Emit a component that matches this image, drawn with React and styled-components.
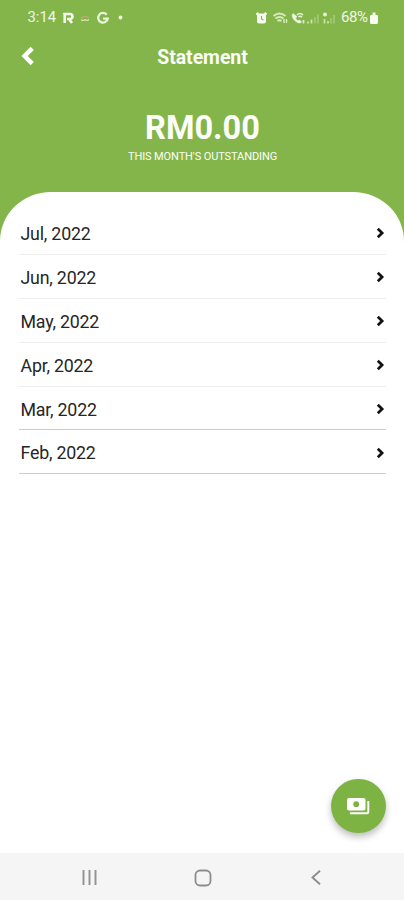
import React from "react";
import styled, { createGlobalStyle } from "styled-components";

const GlobalStyle = createGlobalStyle`
  * {
    box-sizing: border-box;
  }

  body {
    margin: 0;
    background-color: #fff;
    font-family: Roboto, "Liberation Sans", sans-serif;
  }
`;

const StyledScreen = styled.div`
  display: flex;
  flex-direction: column;
  width: 100%;
  height: 900px;
  overflow: hidden;
  background-color: #83b54b;
`;

const StyledStatusBar = styled.div`
  display: flex;
  justify-content: space-between;
  align-items: center;
  height: 35px;
  padding: 0 25px 0 27.5px;
  color: #f0f6e6;
`;

const StyledStatusGroup = styled.div`
  display: flex;
  align-items: center;

  & svg {
    display: block;
  }
`;

const StyledTime = styled.span`
  width: 34px;
  padding-bottom: 1px;
  font-size: 14.8px;
`;

const StyledBattery = styled.span`
  width: 28px;
  padding-bottom: 1px;
  font-size: 15px;
  letter-spacing: -0.4px;
`;

const StyledAppBar = styled.header`
  display: grid;
  grid-template-columns: 56px 1fr 55px;
  align-items: center;
  height: 44px;
`;

const StyledBack = styled.button`
  display: flex;
  align-items: center;
  height: 44px;
  border: none;
  padding: 0 0 2px 21px;
  background: none;
  cursor: pointer;
`;

const StyledTitle = styled.h1`
  margin: 0;
  padding-top: 2px;
  text-align: center;
  font-size: 19.4px;
  line-height: 24px;
  font-weight: 700;
  color: #fbfdf6;
`;

const StyledSummary = styled.div`
  display: flex;
  flex-direction: column;
  align-items: center;
  height: 112.5px;
  padding: 29px 0 0 1px;
  color: #fdfef9;
`;

const StyledAmount = styled.div`
  font-size: 32.6px;
  line-height: 40px;
  font-weight: 700;
`;

const StyledCaption = styled.div`
  padding-top: 2px;
  font-size: 11px;
  line-height: 14px;
  letter-spacing: -0.1px;
`;

const StyledSheet = styled.main`
  position: relative;
  flex: 1;
  padding: 19.5px 18px 0 19px;
  border-radius: 51px 51px 0 0 / 49px 49px 0 0;
  background-color: #fff;
`;

const StyledRow = styled.div`
  display: flex;
  justify-content: space-between;
  align-items: center;
  height: 43.9px;
  padding: 2px 1px 0 1.5px;
  border-bottom: 1px solid ${(props) => (props.$dark ? "#cdcdcd" : "#ededed")};
`;

const StyledMonth = styled.span`
  color: #262626;
  font-size: 17.8px;
  letter-spacing: -0.2px;
`;

const StyledFab = styled.button`
  position: absolute;
  right: 18.5px;
  bottom: 20px;
  display: flex;
  align-items: center;
  justify-content: center;
  width: 54.5px;
  height: 54.5px;
  border: none;
  border-radius: 50%;
  padding: 1px 0 0;
  background-color: #7db343;
  box-shadow: 0 4px 7px rgba(0, 0, 0, 0.26);
  cursor: pointer;
`;

const StyledNavBar = styled.nav`
  display: grid;
  grid-template-columns: repeat(3, 113px);
  justify-content: center;
  align-items: center;
  justify-items: center;
  height: 47px;
  padding: 2px 0 0 1px;
  background-color: #f5f5f5;
`;

const months = [
  { label: "Jul, 2022" },
  { label: "Jun, 2022" },
  { label: "May, 2022" },
  { label: "Apr, 2022" },
  { label: "Mar, 2022", dark: true },
  { label: "Feb, 2022", dark: true },
];

function NotificationIcons() {
  return (
    <svg width="66" height="16" viewBox="0 0 66 16" fill="none">
      <path
        d="M2.700 13V4h5.300a2.400 2.400 0 0 1 0 5H5M7 9l3 4"
        stroke="#f5faee"
        strokeWidth="2.6"
      />
      <path d="M.5 3 3.500 3v3Z" fill="#f5faee" />
      <path d="M19 8q4-3 8 0" stroke="#d9a08a" strokeWidth="1.2" />
      <path d="M19 9.500q2 2 4 0q2 2 4 0" stroke="#cfe3ac" strokeWidth="1.1" />
      <path
        d="M44.700 4.700A4.800 4.800 0 1 0 45.700 8.700H41"
        stroke="#e9f3da"
        strokeWidth="2.3"
      />
      <circle cx="58.500" cy="7.500" r="1.900" fill="#f2f8e8" />
    </svg>
  );
}

function SignalIcons() {
  return (
    <svg width="85" height="16" viewBox="0 0 85 16" fill="none">
      <rect x="1" y="3.500" width="9" height="10" rx="2" fill="#f7fbf0" />
      <path
        d="M.3 4.500 2.500 2.700M10.700 4.500 8.500 2.700"
        stroke="#f7fbf0"
        strokeWidth="1.8"
      />
      <path d="M5.500 6v3l2 1" stroke="#83b54b" strokeWidth="1.1" />
      <path
        d="M17.500 6q6-5 12 0M19.500 8.500q4-3 8 0M21.500 11q2-1.500 4 0"
        stroke="#d9eabd"
        strokeWidth="1.9"
      />
      <path d="M28 9v4M30.500 9v4" stroke="#d9eabd" strokeWidth="1.4" />
      <path
        d="M37 3.500c-2 2 0 6.500 4.500 9 1.500.8 3 .5 4-.5l-2-2-1.600.8c-1-.6-2-1.800-2.300-2.800l1.400-1.300Z"
        fill="#f2f8e8"
        stroke="#f2f8e8"
        strokeWidth=".6"
      />
      <path d="M41 5q3-3 6 0M42.500 7q1.500-1.500 3.500 0" stroke="#e9f3da" strokeWidth="1.6" />
      <path d="M47.500 10v3.500" stroke="#d9eabd" strokeWidth="1.800" />
      <path d="M52 11.500v2M55.500 9.500v4" stroke="#cfe3ac" strokeWidth="1.800" />
      <path d="M59 7v6.500M62 4.500v9" stroke="#a2c874" strokeWidth="1.800" />
      <circle cx="69" cy="4.500" r="2" fill="#e6f1d5" />
      <path d="M68.500 9v4.500M72 11v2.500" stroke="#cfe3ac" strokeWidth="1.700" />
      <path d="M75 8v5.500M78 5v8.500" stroke="#a2c874" strokeWidth="1.800" />
    </svg>
  );
}

function StatusBar() {
  return (
    <StyledStatusBar>
      <StyledStatusGroup>
        <StyledTime>3:14</StyledTime>
        <NotificationIcons />
      </StyledStatusGroup>
      <StyledStatusGroup>
        <SignalIcons />
        <StyledBattery>68%</StyledBattery>
        <svg width="10" height="14" viewBox="0 0 10 14">
          <path
            d="M3.500 1.500h3v2.500h1.500q1 0 1 1V11.500q0 1.500-1.500 1.500h-5q-1.500 0-1.500-1.500V5q0-1 1-1H3.500Z"
            fill="#f7fbf0"
          />
        </svg>
      </StyledStatusGroup>
    </StyledStatusBar>
  );
}

export default function App() {
  return (
    <>
      <GlobalStyle />
      <StyledScreen>
        <StatusBar />
        <StyledAppBar>
          <StyledBack aria-label="Back">
            <svg width="14" height="20" viewBox="0 0 14 20" fill="none">
              <path d="M11.200 2.300 3.600 10l7.600 7.700" stroke="#fff" strokeWidth="4.500" />
            </svg>
          </StyledBack>
          <StyledTitle>Statement</StyledTitle>
        </StyledAppBar>
        <StyledSummary>
          <StyledAmount>RM0.00</StyledAmount>
          <StyledCaption>THIS MONTH'S OUTSTANDING</StyledCaption>
        </StyledSummary>
        <StyledSheet>
          {months.map((month) => (
            <StyledRow key={month.label} $dark={month.dark}>
              <StyledMonth>{month.label}</StyledMonth>
              <svg width="9" height="12" viewBox="0 0 9 12" fill="none">
                <path d="M1.800 1.800 6.100 6l-4.300 4.200" stroke="#111" strokeWidth="2.700" />
              </svg>
            </StyledRow>
          ))}
          <StyledFab aria-label="Payments">
            <svg width="24" height="18" viewBox="0 0 24 18" fill="none">
              <rect x="1" y="1" width="18.500" height="12.500" rx="2" fill="#fff" />
              <circle cx="10.200" cy="7.200" r="2.900" fill="#7db343" />
              <path d="M4 16.300h17q1.300 0 1.300-1.300V4" stroke="#fff" strokeWidth="1.900" />
            </svg>
          </StyledFab>
        </StyledSheet>
        <StyledNavBar>
          <svg width="17" height="17" viewBox="0 0 17 17">
            <path d="M2.500 1v15M8.500 1v15M14.500 1v15" stroke="#929292" strokeWidth="1.900" />
          </svg>
          <svg width="18" height="18" viewBox="0 0 18 18" fill="none">
            <rect x="1.500" y="1.500" width="15" height="15" rx="4.500" stroke="#8d8d8d" strokeWidth="1.800" />
          </svg>
          <svg width="12" height="17" viewBox="0 0 12 17" fill="none">
            <path d="M10 1.800 2.500 8.500l7.500 6.700" stroke="#8d8d8d" strokeWidth="1.900" />
          </svg>
        </StyledNavBar>
      </StyledScreen>
    </>
  );
}
